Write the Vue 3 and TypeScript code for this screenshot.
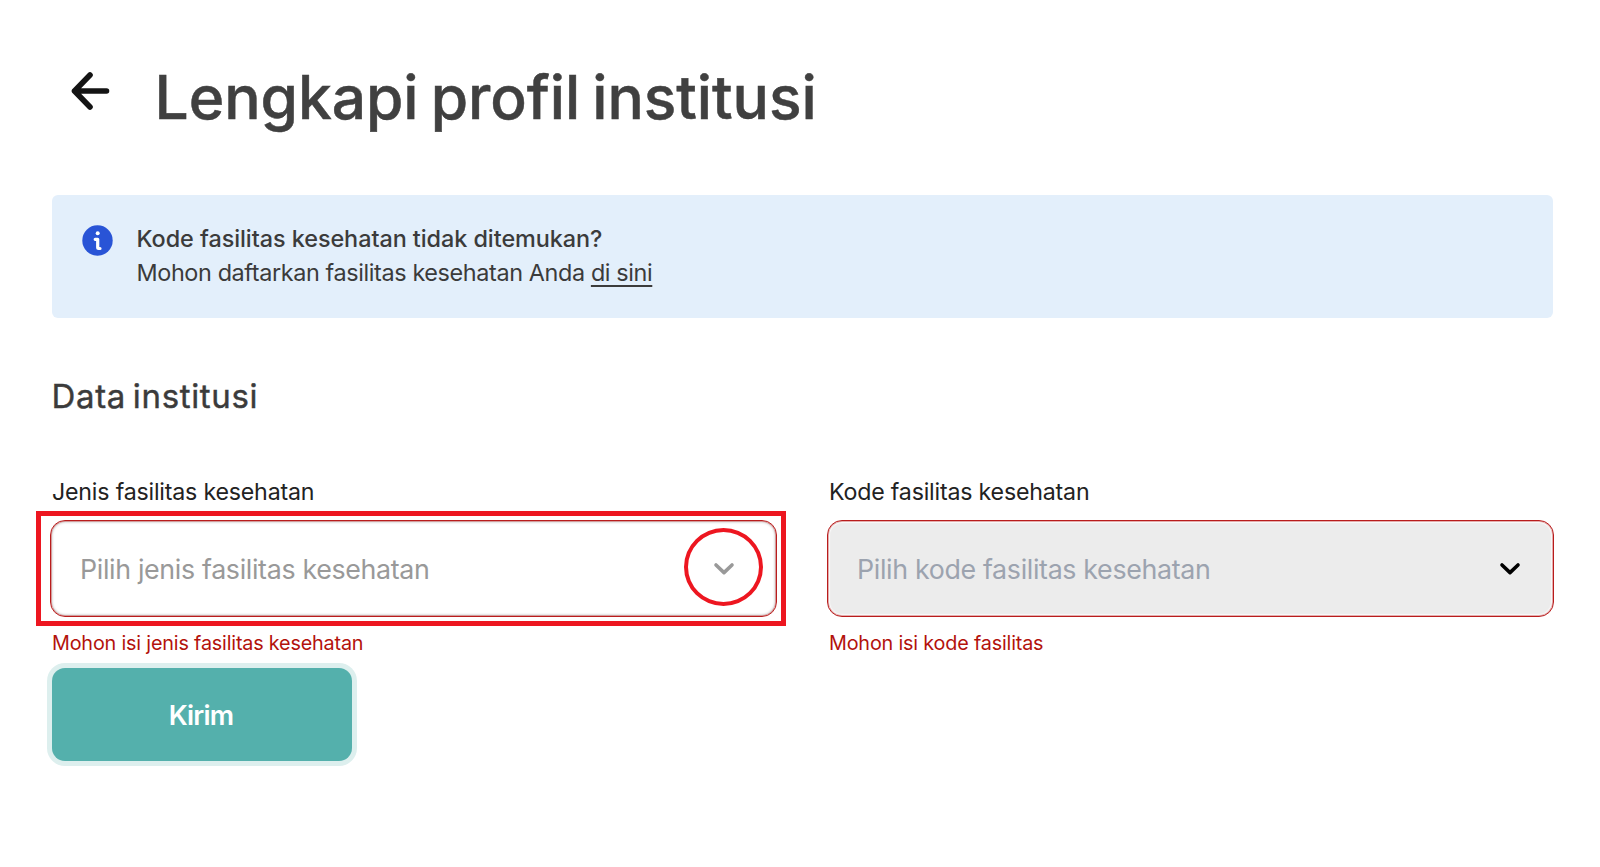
<template>
  <div class="page">
    <header class="page-header">
      <button class="back" type="button" aria-label="Kembali">
        <svg width="40" height="40" viewBox="0 0 40 40" fill="none">
          <path d="M35.5 20H3.5M19 4L3.5 20L19 36" stroke="#141414" stroke-width="5.6" stroke-linecap="round" stroke-linejoin="round" />
        </svg>
      </button>
      <h1>Lengkapi profil institusi</h1>
    </header>

    <div class="alert">
      <svg class="alert-icon" width="31" height="31" viewBox="0 0 31 31">
        <circle cx="15.5" cy="15.5" r="15.2" fill="#2954d6" />
        <circle cx="15.7" cy="8.2" r="2" fill="#fff" />
        <path d="M13.2 14.3h2.5v8.3q0 .9 .9 .9h1.4" fill="none" stroke="#fff" stroke-width="3.2" stroke-linecap="round" stroke-linejoin="round" />
      </svg>
      <div>
        <p class="alert-title">Kode fasilitas kesehatan tidak ditemukan?</p>
        <p class="alert-text">Mohon daftarkan fasilitas kesehatan Anda <a href="#">di sini</a></p>
      </div>
    </div>

    <h2>Data institusi</h2>

    <form @submit.prevent="submit">
      <div class="fields">
        <div v-for="field in fields" :key="field.id" class="field">
          <label :id="field.id + '-label'">{{ field.label }}</label>
          <div class="select" :class="{ disabled: field.disabled }" role="combobox" :aria-labelledby="field.id + '-label'">
            <span class="placeholder">{{ field.placeholder }}</span>
            <svg class="chevron" width="22" height="14" viewBox="0 0 22 14" fill="none">
              <path d="M3 3L11 10.6L19 3" stroke="currentColor" stroke-width="3.6" stroke-linecap="round" stroke-linejoin="round" />
            </svg>
            <template v-if="field.highlighted">
              <div class="mark-box"></div>
              <div class="mark-circle"></div>
            </template>
          </div>
          <p class="error">{{ field.error }}</p>
        </div>
      </div>
      <button class="submit" type="submit">Kirim</button>
    </form>
  </div>
</template>

<script setup lang="ts">
import { ref } from 'vue';

interface Field {
  id: string;
  label: string;
  placeholder: string;
  error: string;
  disabled: boolean;
  highlighted: boolean;
}

const fields = ref<Field[]>([
  {
    id: 'jenis',
    label: 'Jenis fasilitas kesehatan',
    placeholder: 'Pilih jenis fasilitas kesehatan',
    error: 'Mohon isi jenis fasilitas kesehatan',
    disabled: false,
    highlighted: true,
  },
  {
    id: 'kode',
    label: 'Kode fasilitas kesehatan',
    placeholder: 'Pilih kode fasilitas kesehatan',
    error: 'Mohon isi kode fasilitas',
    disabled: true,
    highlighted: false,
  },
]);

const submitted = ref(false);

const submit = () => {
  submitted.value = true;
};
</script>

<style>
body {
  margin: 0;
  background: #fff;
}
</style>

<style scoped>
.page {
  box-sizing: border-box;
  width: 1600px;
  height: 867px;
  padding: 58px 46px 0 52px;
  overflow: hidden;
  font-family: Inter, "Noto Sans", sans-serif;
  color: #3b3b3b;
}
h1,
h2,
p {
  margin: 0;
  white-space: nowrap;
}
.page-header {
  display: flex;
  align-items: flex-start;
  height: 137px;
}
.back {
  margin: 13px 0 0 19px;
  padding: 0;
  border: 0;
  background: none;
  height: 40px;
  width: 40px;
}
.back svg {
  display: block;
}
h1 {
  margin-left: 43.5px;
  font-size: 60.5px;
  line-height: 78px;
  font-weight: 500;
  letter-spacing: -0.05px;
  word-spacing: -4px;
  color: #404040;
  -webkit-text-stroke: 0.5px #404040;
}
.alert {
  display: flex;
  box-sizing: border-box;
  width: 1501px;
  height: 122.5px;
  padding: 27px 30px;
  border-radius: 6px;
  background: #e3effb;
}
.alert-icon {
  flex: none;
  margin: 3px 23.5px 0 0;
}
.alert-title,
.alert-text {
  font-size: 23.4px;
  line-height: 34px;
}
.alert-title {
  font-weight: 500;
  letter-spacing: -0.05px;
}
.alert-text {
  letter-spacing: -0.38px;
}
.alert-text a {
  color: inherit;
  text-decoration: underline;
  text-decoration-thickness: 1.5px;
  text-underline-offset: 4px;
}
h2 {
  margin: 56.5px 0 0 -0.5px;
  font-size: 33px;
  line-height: 44px;
  font-weight: 400;
  letter-spacing: 0.65px;
  word-spacing: -3px;
  -webkit-text-stroke: 0.4px #3b3b3b;
}
.fields {
  display: grid;
  grid-template-columns: 725px 725px;
  column-gap: 52px;
  margin-top: 58px;
}
label {
  display: block;
  font-size: 23.2px;
  line-height: 32px;
  height: 44px;
  color: #222;
  letter-spacing: -0.2px;
  white-space: nowrap;
}
.select {
  position: relative;
  display: flex;
  align-items: center;
  justify-content: space-between;
  box-sizing: border-box;
  width: 727px;
  height: 97px;
  margin-left: -2px;
  padding: 0 41px 0 29px;
  border: 1px solid #b91c1c;
  border-radius: 15px;
  box-shadow: inset 0 0 0 1px rgba(185, 28, 28, 0.35), inset 0 0 2px 2px #e0e0e0;
  color: #999;
}
.select.disabled {
  padding-right: 32px;
  background: #ececec;
  box-shadow: inset 0 0 0 1px rgba(185, 28, 28, 0.35), inset 0 0 1px 2px #fafafa;
  color: #9ca3af;
}
.placeholder {
  font-size: 26.8px;
  line-height: 36px;
  letter-spacing: -0.34px;
  white-space: nowrap;
}
.disabled .chevron {
  color: #000;
}
/* red callout around the select and its arrow */
.mark-box {
  position: absolute;
  inset: -10px;
  left: -15px;
  border: 5px solid #ed1620;
}
.mark-circle {
  position: absolute;
  top: 6.5px;
  right: 13px;
  box-sizing: border-box;
  width: 79px;
  height: 78px;
  border: 4px solid #ed1620;
  border-radius: 50%;
}
.error {
  margin-top: 12px;
  font-size: 19.8px;
  line-height: 28px;
  letter-spacing: -0.18px;
  color: #b3120c;
}
.submit {
  display: block;
  width: 300px;
  height: 93px;
  margin-top: 11px;
  padding: 2px 2px 0 0;
  border: 0;
  border-radius: 13px;
  background: #54b0ac;
  box-shadow: 0 0 0 5px #ddefee;
  color: #fff;
  font-family: inherit;
  font-size: 27px;
  font-weight: 600;
  letter-spacing: -0.8px;
}
</style>
